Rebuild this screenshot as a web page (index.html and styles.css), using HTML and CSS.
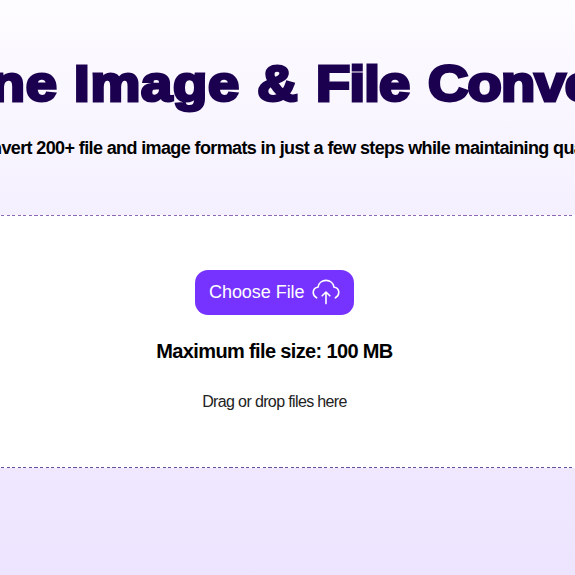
FILE: index.html
```html
<!DOCTYPE html>
<html lang="en">
<head>
<meta charset="utf-8">
<title>Online Image &amp; File Converter</title>
<link rel="stylesheet" href="styles.css">
</head>
<body>
<main class="hero">
  <h1 class="title">Online Image <span class="amp">&amp;</span> <span class="tight">File</span> <span class="tight last">Converter</span></h1>
  <p class="subtitle">Convert 200+ file and image formats in just a few steps while maintaining quality</p>
  <section class="dropzone">
    <button class="choose" type="button">
      <span class="label">Choose File</span>
      <svg class="icon" viewBox="0 0 28 26" fill="none" stroke="currentColor" stroke-width="1.6" stroke-linecap="round" stroke-linejoin="round"><path d="M4.6 18.8C-.5 16 .4 8.5 6 8.2 7.2-.9 20.8-.9 22 8.2 27.6 8.5 28.5 16 23.4 18.8M14 24.6V13M10.2 16.8L14 13L17.8 16.8"/></svg>
    </button>
    <p class="limit">Maximum file size: 100 MB</p>
    <p class="hint">Drag or drop files here</p>
  </section>
</main>
</body>
</html>
```
FILE: styles.css
```css
* { box-sizing: border-box; }
body { margin: 0; overflow: hidden; font-family: "Liberation Sans", Arial, sans-serif; color: #000; }
p, h1 { margin: 0; white-space: nowrap; }
.hero { height: 575px; padding-top: 54px; display: flex; flex-direction: column; align-items: center; overflow: hidden; background: linear-gradient(#fdfcff, #f5f0ff 38%, #efe7ff 85%, #ede5ff); }
.title { margin-right: 10px; font: 900 50px/60px "Liberation Sans", Arial, sans-serif; letter-spacing: .7px; color: #1b0050; -webkit-text-stroke: 3px #1b0050; transform: scaleX(1.12); }
.amp { margin: 0 1px; }
.tight { letter-spacing: -.7px; }
.last { margin-left: 2px; }
.subtitle { margin-top: 22px; font-size: 18px; line-height: 24px; font-weight: 700; letter-spacing: -.62px; }
.dropzone {
  margin-top: 55px; width: 100%; height: 253px; padding: 55px 26px 0 0;
  display: flex; flex-direction: column; align-items: center;
  background:
    repeating-linear-gradient(90deg, #8c68b8 0 3.2px, transparent 3.2px 5.57px) 1px 0 / 100% 1px no-repeat,
    repeating-linear-gradient(90deg, #65509a 0 3.2px, transparent 3.2px 5.57px) 1px 252px / 100% 1px no-repeat,
    #fff;
}
.choose { width: 159px; height: 45px; border: 0; border-radius: 13px; padding: 0 14px 1px; display: flex; align-items: center; justify-content: space-between; background: #7633ff; color: #fff; font: 18px/24px "Liberation Sans", Arial, sans-serif; }
.label { white-space: nowrap; letter-spacing: -.05px; }
.icon { width: 28px; height: 26px; flex: none; }
.limit { margin-top: 24px; font-size: 20px; line-height: 24px; font-weight: 700; letter-spacing: -.64px; }
.hint { margin-top: 27px; font-size: 16px; line-height: 24px; letter-spacing: -.63px; color: #222; }
```
